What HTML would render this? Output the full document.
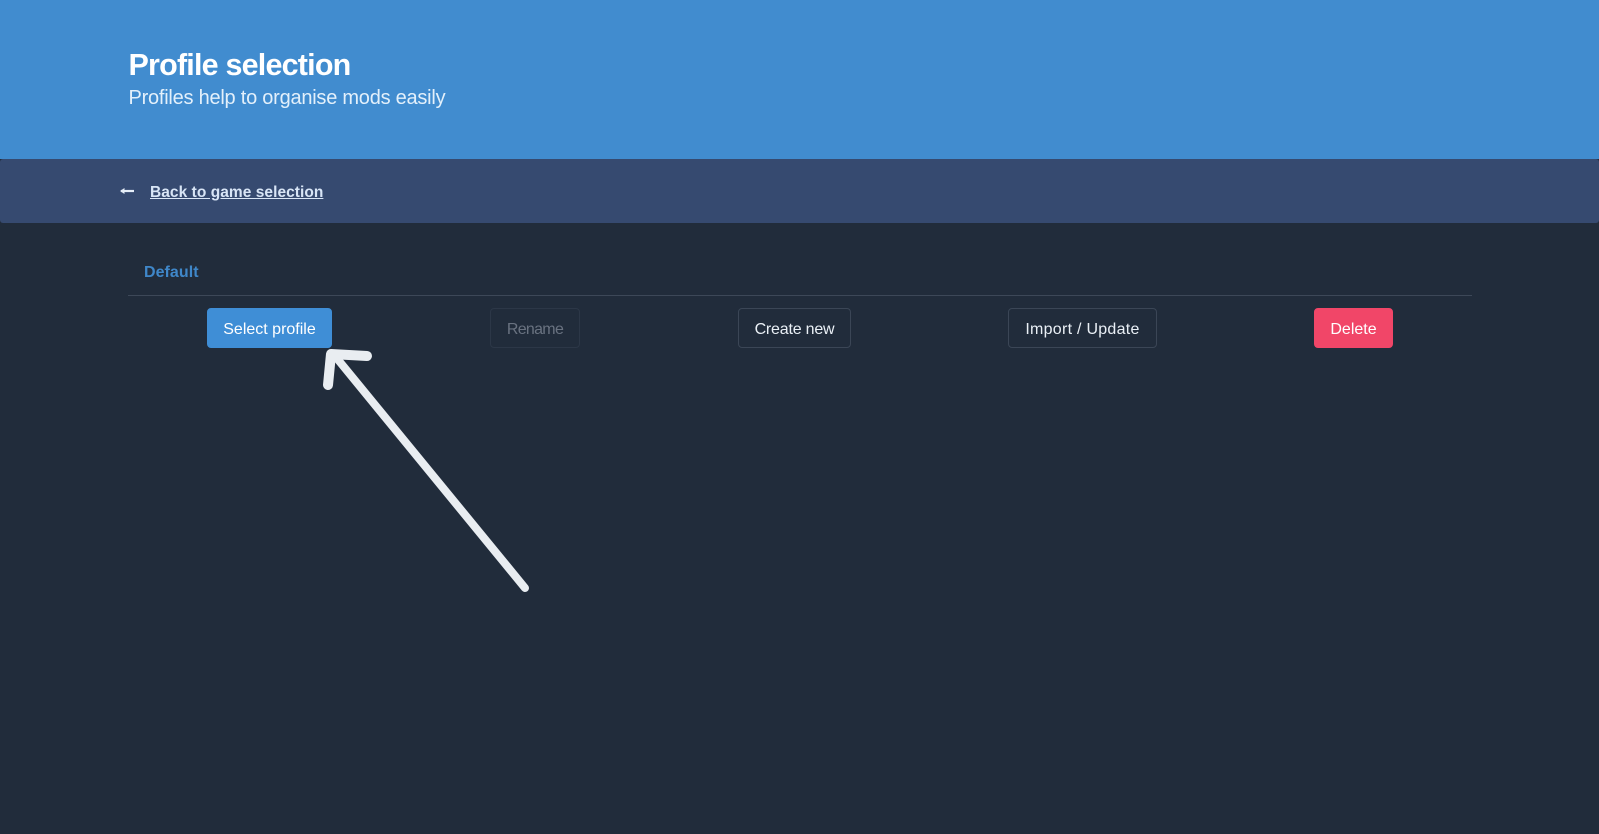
<!DOCTYPE html>
<html><head><meta charset="utf-8"><style>
html,body{margin:0;padding:0}
body{width:1599px;height:834px;background:#212c3b;position:relative;overflow:hidden;font-family:"Liberation Sans",sans-serif}
div,a,span{position:absolute;white-space:nowrap}
.hero{left:0;top:0;width:1599px;height:159px;background:#418ccf}
.nav{left:0;top:159px;width:1599px;height:64px;background:#364a70;border-radius:3px}
.t{left:128.5px;top:45px;font-size:30.5px;line-height:40px;font-weight:bold;color:#fff;letter-spacing:-.8px}
.s{left:128.5px;top:85px;font-size:20px;line-height:26px;color:#e3f0fb;letter-spacing:-.24px}
.l{left:150px;top:183px;font-size:15.5px;line-height:20px;font-weight:bold;color:#d8e5f6;text-decoration:underline;letter-spacing:.05px}
.d{left:144px;top:263px;font-size:16px;line-height:20px;font-weight:bold;color:#3f87c9;letter-spacing:.05px}
.hr{left:128px;top:295px;width:1344px;height:1px;background:#3d4858}
.b{top:308px;height:40px;box-sizing:border-box;border-radius:4px;border:1px solid #3b4656;color:#eaf0f6;font-size:16px;line-height:42px;text-align:center}
</style></head><body>
<div class="hero"></div>
<div class="t">Profile selection</div>
<div class="s">Profiles help to organise mods easily</div>
<div class="nav"></div>
<svg style="position:absolute;left:118px;top:184px" width="20" height="14"><path d="M3 7H16" stroke="#e6eef8" stroke-width="2.2"/><path d="M2 7L6.5 4V10Z" fill="#e6eef8"/></svg>
<a class="l">Back to game selection</a>
<div class="d">Default</div>
<div class="hr"></div>
<div class="b" style="left:207px;width:125px;background:#3f8ed6;border-color:#3f8ed6;color:#fff">Select profile</div>
<div class="b" style="left:490px;width:90px;border-color:#2c3747;color:#697280;letter-spacing:-.7px">Rename</div>
<div class="b" style="left:738px;width:113px;letter-spacing:-.2px">Create new</div>
<div class="b" style="left:1008px;width:149px;letter-spacing:.27px">Import / Update</div>
<div class="b" style="left:1314px;width:79px;background:#f14668;border-color:#f14668;color:#fff">Delete</div>
<svg style="position:absolute;left:0;top:0" width="1599" height="834" fill="none" stroke="#e9edf1" stroke-linecap="round" stroke-linejoin="round"><path d="M335 356L525 588" stroke-width="8"/><path d="M328 385L331 354L367 356" stroke-width="10"/></svg>
</body></html>
